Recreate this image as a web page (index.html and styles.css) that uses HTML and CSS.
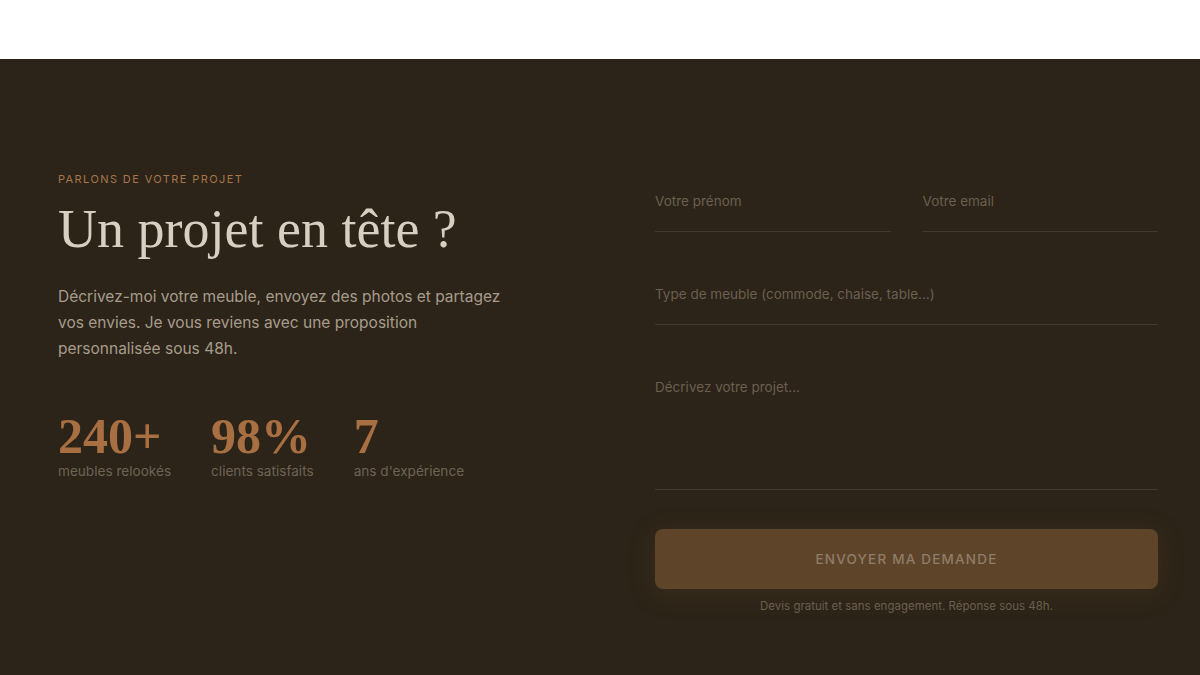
FILE: index.html
```html
<!DOCTYPE html>
<html lang="fr">
<head>
    <meta charset="UTF-8">
    <title>Contact</title>
    <link rel="stylesheet" href="styles.css">
</head>
<body>
<div class="topbar"></div>
<section class="contact">
    <div class="contact-inner">
        <div class="intro">
            <span class="eyebrow">Parlons de votre projet</span>
            <h2 class="title">Un projet en tête ?</h2>
            <p class="lead">Décrivez-moi votre meuble, envoyez des photos et partagez vos envies. Je vous reviens avec une proposition personnalisée sous 48h.</p>
            <ul class="stats">
                <li><strong>240+</strong><span>meubles relookés</span></li>
                <li><strong>98%</strong><span>clients satisfaits</span></li>
                <li><strong>7</strong><span>ans d'expérience</span></li>
            </ul>
        </div>
        <form class="quote" name="quote">
            <div class="row">
                <input type="text" name="firstname" placeholder="Votre prénom">
                <input type="email" name="email" placeholder="Votre email">
            </div>
            <input type="text" name="type" placeholder="Type de meuble (commode, chaise, table...)">
            <textarea name="message" placeholder="Décrivez votre projet..."></textarea>
            <button type="submit">Envoyer ma demande</button>
            <p class="note">Devis gratuit et sans engagement. Réponse sous 48h.</p>
        </form>
    </div>
</section>
</body>
</html>
```

FILE: styles.css
```css
* {
    margin: 0;
    padding: 0;
    box-sizing: border-box;
    list-style: none;
}

body {
    background: #FFFFFF;
    font-family: Inter, "Open Sans", sans-serif;
}

.topbar {
    height: 59px;
    background: #FFFFFF;
}

.contact {
    background: #2c2418;
    min-height: 616px;
    padding: 112px 42px 60px 58px;
}

.contact-inner {
    display: grid;
    grid-template-columns: 1fr 1fr;
    column-gap: 94px;
    align-items: start;
}

/* left column */
.eyebrow {
    display: block;
    font-size: 11px;
    line-height: 16px;
    letter-spacing: 1.4px;
    text-transform: uppercase;
    color: #a8754a;
}

.title {
    font-family: "Liberation Serif", serif;
    font-weight: 400;
    font-size: 54px;
    line-height: 1.2;
    margin-top: 10px;
    color: #d8cfc2;
}

.lead {
    max-width: 455px;
    margin-top: 22px;
    font-size: 15.5px;
    line-height: 26px;
    color: #a79c8c;
}

.stats {
    display: flex;
    gap: 40px;
    margin-top: 48px;
}

.stats > li {
    display: flex;
    flex-direction: column;
}

.stats strong {
    font-family: "Liberation Serif", serif;
    font-weight: 700;
    font-size: 50px;
    line-height: 52px;
    color: #a86f42;
}

.stats span {
    font-size: 13.6px;
    line-height: 18px;
    color: #6d6354;
}

/* form */
.quote {
    display: flex;
    flex-direction: column;
    margin-top: 8px;
}

.quote .row {
    display: grid;
    grid-template-columns: 1fr 1fr;
    gap: 32px;
}

.quote input,
.quote textarea {
    display: block;
    width: 100%;
    background: transparent;
    border: none;
    border-bottom: 1px solid #43392b;
    padding: 12px 0 20px;
    font-family: inherit;
    font-size: 13.5px;
    line-height: 20px;
    color: #d8cfc2;
    outline: none;
}

.quote input::placeholder,
.quote textarea::placeholder {
    color: #6b5f4f;
}

.quote > input,
.quote > textarea {
    margin-top: 40px;
}

.quote textarea {
    height: 125px;
    resize: none;
}

.quote button {
    height: 60px;
    margin-top: 39px;
    border: none;
    border-radius: 8px;
    background: #5e4429;
    color: #8e7d6a;
    font-family: inherit;
    font-size: 13.5px;
    font-weight: 500;
    letter-spacing: 1.2px;
    text-transform: uppercase;
    box-shadow: 0 4px 26px rgba(92, 66, 40, 0.3);
}

.quote .note {
    margin-top: 10px;
    text-align: center;
    font-size: 11.5px;
    color: #6b5f4f;
}
```
